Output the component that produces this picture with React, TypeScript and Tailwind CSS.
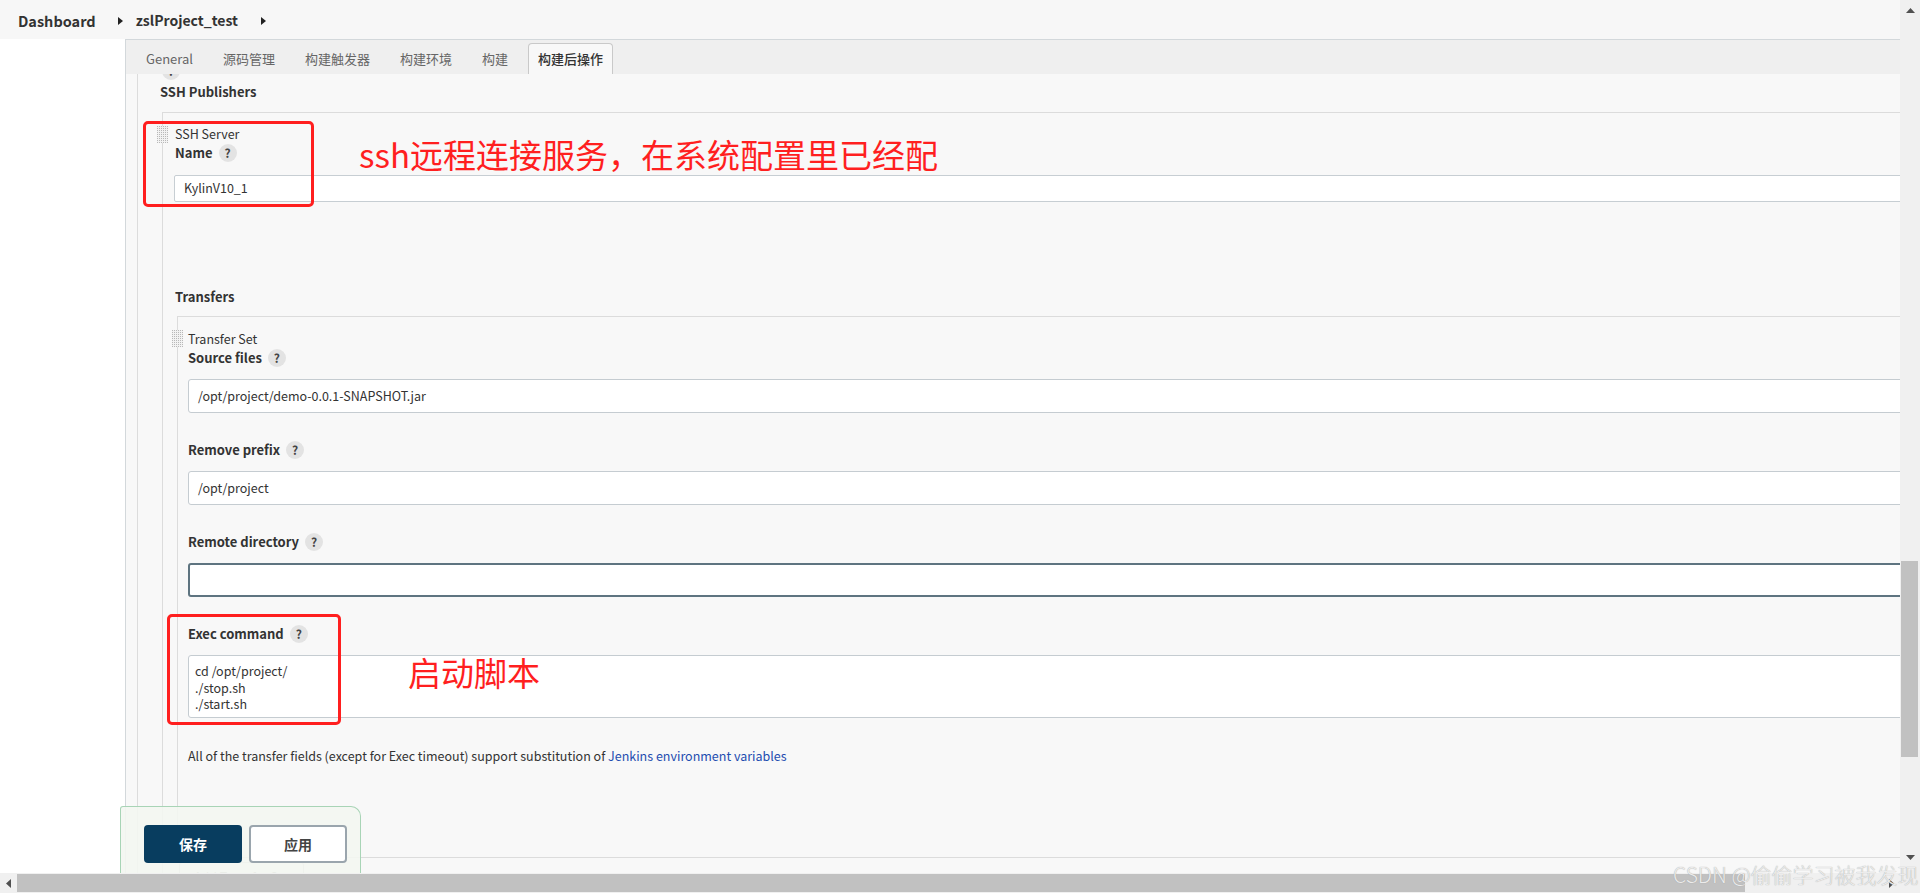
import React from 'react';

const font = "font-['Noto_Sans_CJK_SC',sans-serif]";

function Help() {
  return (
    <span className="inline-flex h-[18px] w-[18px] shrink-0 items-center justify-center rounded-full bg-[#e3e3e3] text-[12px] font-bold leading-none text-[#444]">
      ?
    </span>
  );
}

function Handle() {
  const dots = [];
  for (let x = 0; x < 11; x += 2) {
    for (let y = 0; y < 17; y += 2) {
      dots.push(<rect key={`${x}-${y}`} x={x} y={y} width="1" height="1" fill="#b8b8b8" />);
    }
  }
  return (
    <svg width="11" height="17" viewBox="0 0 11 17" className="absolute left-[-6px] top-[13px]">
      <rect width="11" height="17" fill="#f2f2f2" />
      {dots}
    </svg>
  );
}

function Label({ text }: { text: string }) {
  return (
    <div className="flex h-[20px] items-center gap-[6px]">
      <span className="text-[13px] font-bold leading-[20px] text-[#333]">{text}</span>
      <Help />
    </div>
  );
}

function Field({ value, focused }: { value?: string; focused?: boolean }) {
  return (
    <div
      className={
        focused
          ? 'mt-[11px] flex h-[34px] items-center rounded-[3px] border-2 border-[#5e7480] bg-white pl-[8px] text-[12.5px] text-[#333]'
          : 'mt-[11px] flex h-[34px] items-center rounded-[3px] border border-[#c5ccd1] bg-white pl-[9px] text-[12.5px] text-[#333]'
      }
    >
      {value}
    </div>
  );
}

function Arrow() {
  return (
    <svg width="5" height="8" viewBox="0 0 5 8">
      <polygon points="0,0 5,4 0,8" fill="#222" />
    </svg>
  );
}

export default function App() {
  const tabs = ['General', '源码管理', '构建触发器', '构建环境', '构建'];

  return (
    <div className={`relative flex h-[893px] w-[1920px] flex-col overflow-hidden bg-white ${font}`}>
      <div className="flex h-[873px]">
        {/* page */}
        <div className="flex w-[1900px] flex-col overflow-hidden">
          <div className="flex h-[39px] shrink-0 items-center bg-[#f7f7f7] pl-[18px] pt-[2px]">
            <span className="text-[14.5px] font-bold text-[#333]">Dashboard</span>
            <span className="ml-[22px] mr-[13px] flex items-center"><Arrow /></span>
            <span className="text-[14px] font-bold text-[#333]">zslProject_test</span>
            <span className="ml-[23px] flex items-center"><Arrow /></span>
          </div>

          <div className="flex flex-1">
            <div className="w-[125px] shrink-0 bg-white" />
            <div className="flex min-w-0 flex-1 flex-col overflow-hidden border-l border-t border-[#d3d8db]">
              <div className="flex h-[34px] w-[1800px] shrink-0 items-end bg-[#efefef] pl-[5px]">
                {tabs.map((t) => (
                  <div key={t} className="flex h-[31px] items-center px-[15px] text-[13px] text-[#666]">
                    {t}
                  </div>
                ))}
                <div className="ml-[5px] flex h-[31px] items-center rounded-t-[4px] border border-b-0 border-[#c9c9c9] bg-[#f8f8f8] px-[9px] text-[13px] font-medium text-[#333]">
                  构建后操作
                </div>
              </div>

              <div className="w-[1800px] flex-1 overflow-hidden bg-[#f8f8f8] pl-[11px]">
                <div className="h-full border-l border-[#dcdcdc] pl-[22px]">
                  <div className="ml-[2px] mt-[-12px] flex h-[18px]"><Help /></div>
                  <div className="mt-[2px] text-[13px] font-bold leading-[20px] text-[#333]">SSH Publishers</div>

                  <div className="relative ml-[2px] mt-[10px] border-l border-t border-[#dcdcdc] pl-[12px] pt-[12px]">
                    <Handle />
                    <div className="text-[12.5px] leading-[18px] text-[#333]">SSH Server</div>
                    <Label text="Name" />
                    <div className="-ml-[1px] mt-[12px] flex h-[27px] items-center rounded-[2px] border border-[#c7ced3] bg-white pl-[9px] text-[12.5px] text-[#333]">
                      KylinV10_1
                    </div>

                    <div className="mt-[85px] text-[13px] font-bold leading-[20px] text-[#333]">Transfers</div>

                    <div className="relative ml-[2px] mt-[9px] border-b border-l border-t border-[#dcdcdc] pb-[91px] pl-[10px] pt-[13px]">
                      <Handle />
                      <div className="text-[12.5px] leading-[18px] text-[#333]">Transfer Set</div>
                      <Label text="Source files" />
                      <Field value="/opt/project/demo-0.0.1-SNAPSHOT.jar" />
                      <div className="mt-[27px]"><Label text="Remove prefix" /></div>
                      <Field value="/opt/project" />
                      <div className="mt-[27px]"><Label text="Remote directory" /></div>
                      <Field focused />
                      <div className="mt-[27px]"><Label text="Exec command" /></div>
                      <div className="mt-[11px] h-[63px] rounded-[3px] border border-[#c5ccd1] bg-white pl-[6px] pt-[7px] text-[12.5px] leading-[16.5px] text-[#333]">
                        <div>cd /opt/project/</div>
                        <div>./stop.sh</div>
                        <div>./start.sh</div>
                      </div>
                      <div className="mt-[28px] text-[12.5px] leading-[20px] text-[#333]">
                        All of the transfer fields (except for Exec timeout) support substitution of{' '}
                        <span className="text-[#1f4db0]">Jenkins environment variables</span>
                      </div>
                    </div>

                    <div className="ml-[4px] mt-[4px] flex h-[30px] w-[125px] items-center justify-center rounded-[3px] border border-[#cccccc] bg-white text-[12.5px] text-[#999]">
                      Add Transfer Set
                    </div>
                  </div>
                </div>
              </div>
            </div>
          </div>
        </div>

        {/* vertical scrollbar */}
        <div className="flex w-[20px] flex-col bg-[#f0f0f0]">
          <div className="flex h-[17px] items-center justify-center pt-[4px]">
            <svg width="9" height="5" viewBox="0 0 9 5"><polygon points="0,5 4.5,0 9,5" fill="#505050" /></svg>
          </div>
          <div className="ml-[1px] mt-[544px] h-[196px] w-[17px] bg-[#c1c1c1]" />
          <div className="flex-1" />
          <div className="flex h-[20px] items-start justify-center pt-[2px]">
            <svg width="9" height="5" viewBox="0 0 9 5"><polygon points="0,0 9,0 4.5,5" fill="#505050" /></svg>
          </div>
        </div>
      </div>

      {/* horizontal scrollbar */}
      <div className="flex h-[20px] bg-[#f0f0f0]">
        <div className="flex w-[17px] items-center justify-center">
          <svg width="5" height="9" viewBox="0 0 5 9"><polygon points="5,0 0,4.5 5,9" fill="#505050" /></svg>
        </div>
        <div className="mt-[1px] h-[18px] w-[1728px] bg-[#c1c1c1]" />
        <div className="flex-1" />
        <div className="flex w-[17px] items-center justify-center">
          <svg width="5" height="9" viewBox="0 0 5 9"><polygon points="0,0 5,4.5 0,9" fill="#505050" /></svg>
        </div>
        <div className="w-[20px]" />
      </div>

      {/* sticky save bar */}
      <div className="absolute left-[120px] top-[806px] flex h-[67px] w-[241px] gap-[7px] rounded-tl-[3px] rounded-tr-[10px] border-l border-r border-t border-[#a8d4b6] bg-[#f3f6f1]/90 pl-[23px] pt-[18px]">
        <div className="flex h-[38px] w-[98px] items-center justify-center rounded-[4px] bg-[#083d5f] text-[14px] font-bold text-white">
          保存
        </div>
        <div className="flex h-[38px] w-[98px] items-center justify-center rounded-[4px] border-2 border-[#9aa5ad] bg-white text-[14px] font-bold text-[#444]">
          应用
        </div>
      </div>

      {/* annotations */}
      <div className="absolute left-[143px] top-[121px] h-[86px] w-[171px] rounded-[5px] border-[3px] border-[#ff1f1f]" />
      <div className="absolute left-[359px] top-[134px] whitespace-nowrap text-[33px] leading-[40px] text-[#ff1f1f]">
        ssh远程连接服务，在系统配置里已经配
      </div>
      <div className="absolute left-[167px] top-[614px] h-[111px] w-[174px] rounded-[5px] border-[3px] border-[#ff1f1f]" />
      <div className="absolute left-[408px] top-[652px] whitespace-nowrap text-[33px] leading-[40px] text-[#ff1f1f]">启动脚本</div>

      {/* watermark */}
      <div className="absolute left-[1673px] top-[861px] whitespace-nowrap text-[21px] font-light leading-[26px] text-[#ececec] [text-shadow:0_0_1px_#9a9a9a]">
        CSDN @偷偷学习被我发现
      </div>
    </div>
  );
}
